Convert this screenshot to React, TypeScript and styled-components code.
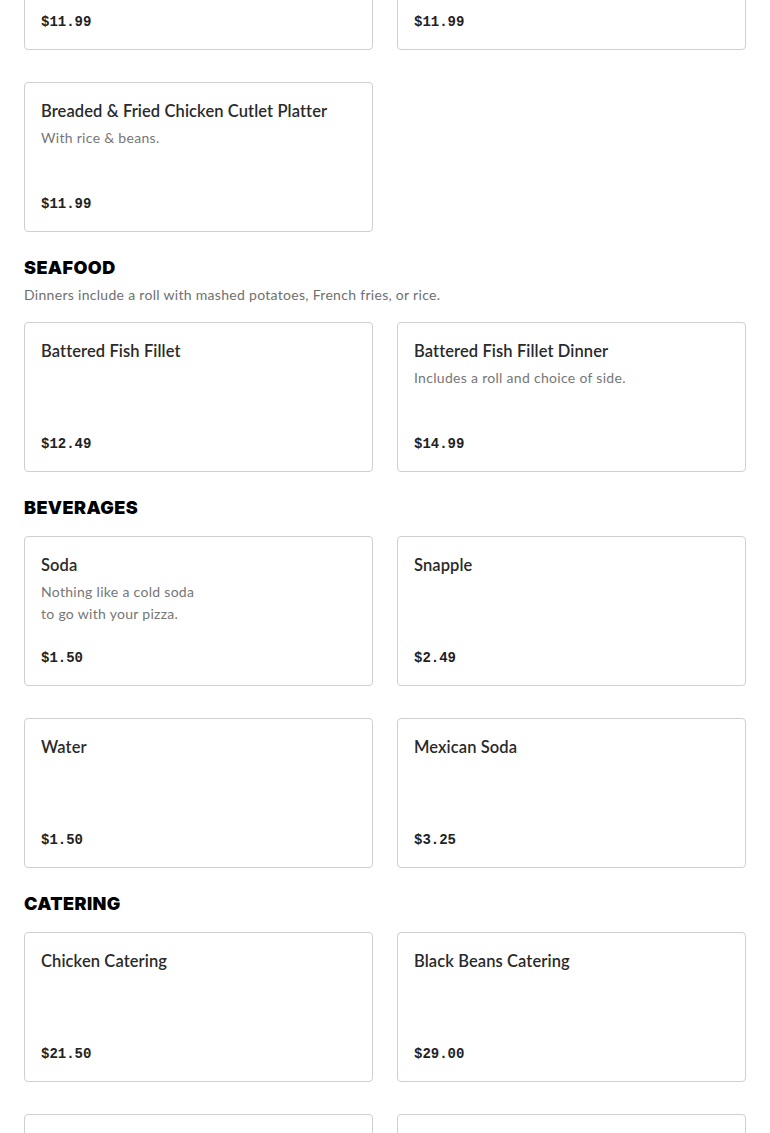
import React from "react";
import styled, { createGlobalStyle } from "styled-components";

const Global = createGlobalStyle`
  html, body { margin: 0; padding: 0; background: #fff; }
  body { font-family: "Lato", "Liberation Sans", sans-serif; color: #2a2a2a; overflow: hidden; }
`;

const Page = styled.main`
  padding: 0 24px;
  margin-top: -100px;
  display: flex;
  flex-direction: column;
  gap: 22px;
`;

const Section = styled.section`
  display: flex;
  flex-direction: column;
`;

const Heading = styled.h2`
  margin: 0;
  font-family: "Inter", "Liberation Sans", sans-serif;
  font-weight: 900;
  font-size: 18px;
  line-height: 28px;
  letter-spacing: 0.4px;
  color: #000;
  text-transform: uppercase;
`;

const SectionNote = styled.p`
  margin: 2px 0 0;
  font-size: 14px;
  line-height: 22px;
  letter-spacing: 0.3px;
  color: #6f6f6f;
`;

const Grid = styled.div<{ $top: number }>`
  margin-top: ${(p) => p.$top}px;
  display: grid;
  grid-template-columns: 1fr 1fr;
  column-gap: 24px;
  row-gap: 32px;
`;

const Card = styled.article`
  box-sizing: border-box;
  min-height: 150px;
  border: 1px solid #cfcfcf;
  border-radius: 4px;
  padding: 16px;
  display: flex;
  flex-direction: column;
  background: #fff;
`;

const Title = styled.h3`
  margin: 0;
  font-size: 16.5px;
  line-height: 24px;
  font-weight: 600;
  letter-spacing: 0.1px;
  color: #2a2a2a;
`;

const Desc = styled.p`
  margin: 4px 0 0;
  font-size: 14px;
  line-height: 22px;
  letter-spacing: 0.3px;
  color: #767676;
  white-space: pre-line;
`;

const Price = styled.div`
  margin-top: auto;
  padding-top: 12px;
  font-family: "Liberation Mono", "DejaVu Sans Mono", monospace;
  font-weight: 700;
  font-size: 14px;
  line-height: 22px;
  color: #222;
`;

type Item = { name: string; desc?: string; price: string };
type Sec = { title?: string; note?: string; items: Item[] };

const sections: Sec[] = [
  {
    items: [
      { name: "Chicken Cutlet Platter", desc: "With rice & beans.", price: "$11.99" },
      { name: "Grilled Chicken Platter", desc: "With rice & beans.", price: "$11.99" },
      { name: "Breaded & Fried Chicken Cutlet Platter", desc: "With rice & beans.", price: "$11.99" },
    ],
  },
  {
    title: "Seafood",
    note: "Dinners include a roll with mashed potatoes, French fries, or rice.",
    items: [
      { name: "Battered Fish Fillet", price: "$12.49" },
      { name: "Battered Fish Fillet Dinner", desc: "Includes a roll and choice of side.", price: "$14.99" },
    ],
  },
  {
    title: "Beverages",
    items: [
      { name: "Soda", desc: "Nothing like a cold soda\nto go with your pizza.", price: "$1.50" },
      { name: "Snapple", price: "$2.49" },
      { name: "Water", price: "$1.50" },
      { name: "Mexican Soda", price: "$3.25" },
    ],
  },
  {
    title: "Catering",
    items: [
      { name: "Chicken Catering", price: "$21.50" },
      { name: "Black Beans Catering", price: "$29.00" },
      { name: "Fried Plantains Catering", price: "$25.00" },
      { name: "Yellow Rice Catering", price: "$25.00" },
    ],
  },
];

export default function App() {
  return (
    <>
      <Global />
      <Page>
        {sections.map((s, i) => (
          <Section key={i}>
            {s.title && <Heading>{s.title}</Heading>}
            {s.note && <SectionNote>{s.note}</SectionNote>}
            <Grid $top={s.title ? (s.note ? 16 : 14) : 0}>
              {s.items.map((it) => (
                <Card key={it.name}>
                  <Title>{it.name}</Title>
                  {it.desc && <Desc>{it.desc}</Desc>}
                  <Price>{it.price}</Price>
                </Card>
              ))}
            </Grid>
          </Section>
        ))}
      </Page>
    </>
  );
}
